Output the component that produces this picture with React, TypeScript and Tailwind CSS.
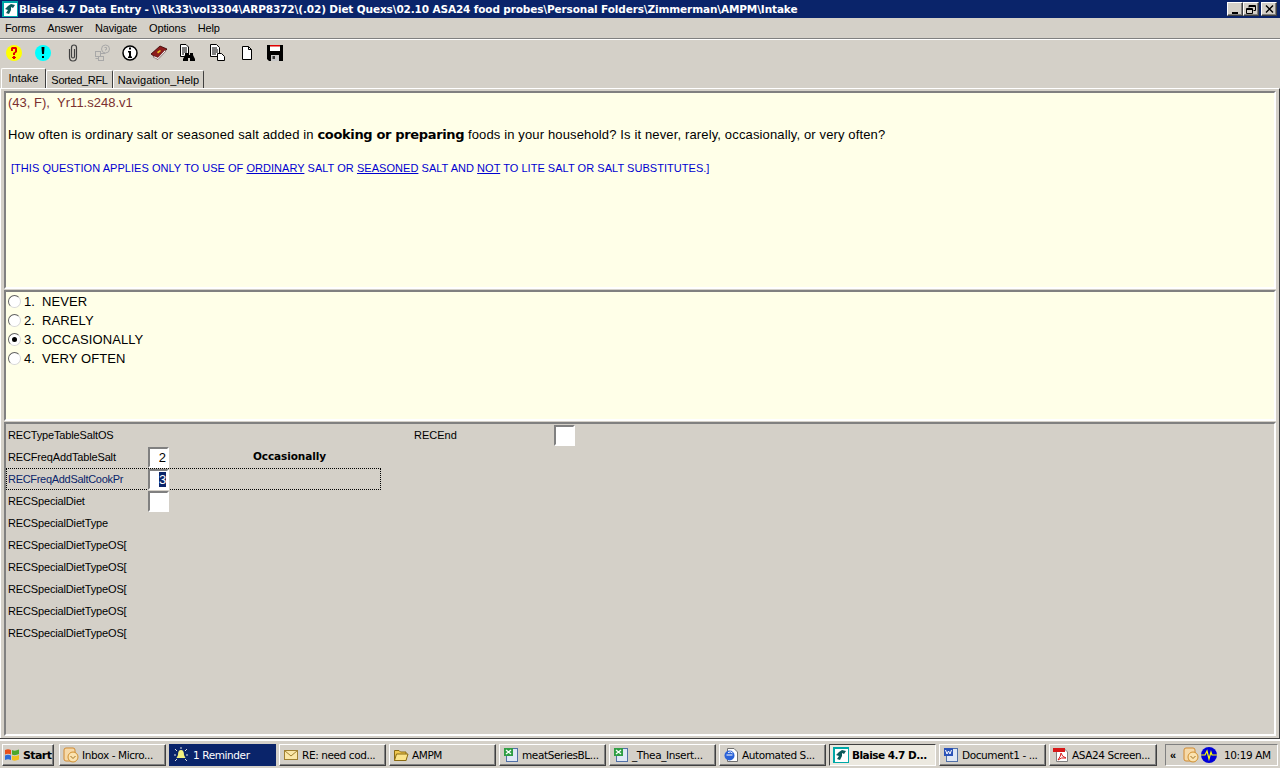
import type React from "react"

const raised =
  "border border-t-white border-l-white border-r-[#404040] border-b-[#404040] shadow-[inset_-1px_-1px_0_#808080]"

const BlaiseLogo = ({ size = 16 }: { size?: number }) => (
  <svg width={size} height={size} viewBox="0 0 16 16" className="shrink-0">
    <rect x="0" y="0" width="16" height="16" fill="#00a8a8" />
    <rect x="2" y="2" width="13" height="13" fill="#fff" />
    <path d="M6 5 L9 3 L13 4 L11 7 L9 6 L9 9 L7 13 L4 12 L6 9 L3 8 Z" fill="#0b5a5a" />
  </svg>
)

const ToolIcons: React.ReactNode[] = [
  <svg key="q" width="18" height="18" viewBox="0 0 18 18">
    <circle cx="9" cy="9" r="8" fill="#ffff00" />
    <path d="M6 7 V4 L7 3 H11 L12 4 V8 L10 9.5 V11 H8 V9 L10 7.5 V5 H8 V7 Z M8 12 H10 V13 H11 V14 H10 V15 H8 V14 H7 V13 H8 Z" fill="#e00000" />
  </svg>,
  <svg key="e" width="18" height="18" viewBox="0 0 18 18">
    <circle cx="9" cy="9" r="8" fill="#00ffff" />
    <path d="M7.5 3 H10.5 L10 10 H8 Z M8 12 H10 V14 H8 Z" fill="#000" />
  </svg>,
  <svg key="clip" width="18" height="18" viewBox="0 0 18 18" fill="none">
    <path d="M5.5 5 V13 Q5.5 17 9 17 Q12.5 17 12.5 13 V3.5 Q12.5 1 10 1 Q7.5 1 7.5 3.5 V12.5 Q7.5 14 9 14 Q10.5 14 10.5 12.5 V5" stroke="#404040" strokeWidth="1.2" />
  </svg>,
  <svg key="net" width="18" height="18" viewBox="0 0 18 18" fill="none" stroke="#a8a8a8">
    <circle cx="12.5" cy="5" r="4" />
    <path d="M11.5 3.5 H13.5 V5.5 H12.5 V6.5" />
    <rect x="2.5" y="7.5" width="5" height="5" />
    <rect x="5.5" y="12.5" width="5" height="4" />
    <path d="M7.5 9.5 H12 V9 M2.5 14.5 H5.5" />
  </svg>,
  <svg key="info" width="18" height="18" viewBox="0 0 18 18">
    <circle cx="9" cy="9" r="7" fill="#fff" stroke="#000" strokeWidth="1.5" />
    <path d="M8 3.5 H10 V5.5 H8 Z M7 7 H10 V12.5 H11 V14 H7 V12.5 H8 V8.5 H7 Z" fill="#000" />
  </svg>,
  <svg key="book" width="18" height="18" viewBox="0 0 18 18">
    <path d="M1 10 L10 2 L17 5 L8 15 Z" fill="#8c1c1c" stroke="#300" strokeWidth="0.8" />
    <path d="M3 13 L8 15.5 L16 7 L15 6 L8 13.5 L4 12 Z" fill="#fff" stroke="#300" strokeWidth="0.4" />
    <path d="M7 8 L10 6 L11 7 L8 9.5 Z" fill="#e8c020" />
  </svg>,
  <svg key="find" width="18" height="18" viewBox="0 0 18 18">
    <path d="M1.5 0.5 H7 L9.5 3 V12.5 H1.5 Z" fill="#fff" stroke="#000" />
    <path d="M3 4 H8 M3 6 H8 M3 8 H8 M3 10 H5" stroke="#000" />
    <path d="M6 11 V9 H9 V11 H11 V9 H14 V11 L16 15 V17 H11 V14 H9 V17 H4 V15 Z" fill="#000" />
  </svg>,
  <svg key="docs" width="18" height="18" viewBox="0 0 18 18">
    <path d="M1.5 0.5 H7.5 L10.5 3.5 V12.5 H1.5 Z" fill="#fff" stroke="#000" />
    <path d="M3 4 H8 M3 6 H9 M3 8 H9 M3 10 H7" stroke="#000" />
    <path d="M8.5 9.5 H12.5 L15.5 12.5 V16.5 H8.5 Z" fill="#fff" stroke="#000" />
  </svg>,
  <svg key="page" width="18" height="18" viewBox="0 0 18 18">
    <path d="M4.5 2.5 H10.5 L13.5 5.5 V15.5 H4.5 Z" fill="#fff" stroke="#000" />
    <path d="M10.5 2.5 V5.5 H13.5" fill="none" stroke="#000" />
  </svg>,
  <svg key="save" width="18" height="18" viewBox="0 0 18 18">
    <path d="M1 1 H17 V17 H3 L1 15 Z" fill="#000" />
    <rect x="4" y="1" width="10" height="6" fill="#fff" />
    <rect x="4" y="1" width="10" height="1.5" fill="#e00000" />
    <rect x="5" y="11" width="8" height="6" fill="#c8c8c8" />
    <rect x="6.5" y="12" width="2.5" height="3" fill="#333" />
  </svg>,
]

const ToolbarOffsets = ["w-[29px]", "w-[30px]", "w-[29px]", "w-[28px]", "w-[29px]", "w-[29px]", "w-[30px]", "w-[29px]", "w-[28px]", "w-[29px]"]

const Radio = ({ checked }: { checked?: boolean }) => (
  <span className="relative flex h-[13px] w-[13px] shrink-0 items-center justify-center rounded-full border border-t-[#606060] border-l-[#606060] border-r-[#d8d8d8] border-b-[#d8d8d8] bg-white">
    {checked && <span className="h-[5px] w-[5px] rounded-full bg-black" />}
  </span>
)

const Field = ({ value, selected }: { value?: string; selected?: boolean }) => (
  <div className="flex h-[21px] w-[21px] shrink-0 items-center justify-end border-2 border-t-[#808080] border-l-[#808080] border-r-white border-b-white bg-white pr-[1px] font-['Liberation_Sans',sans-serif] text-[13px] leading-none text-black">
    {selected ? (
      <span className="flex h-[15px] w-[7px] items-center justify-center bg-[#0a246a] text-white">{value}</span>
    ) : (
      value
    )}
  </div>
)

const labelRows = [
  "RECSpecialDietType",
  "RECSpecialDietTypeOS[",
  "RECSpecialDietTypeOS[",
  "RECSpecialDietTypeOS[",
  "RECSpecialDietTypeOS[",
  "RECSpecialDietTypeOS[",
]

const Label = ({ children }: { children: React.ReactNode }) => (
  <span className="w-[142px] shrink-0 whitespace-nowrap pl-[2px] text-[11px] tracking-[-0.15px]">{children}</span>
)

const OutlookIcon = () => (
  <svg width="16" height="16" viewBox="0 0 16 16" className="shrink-0">
    <rect x="1" y="1" width="11" height="13" rx="2" fill="#f6d9a8" stroke="#d08a30" />
    <circle cx="10" cy="10" r="5" fill="#fbe3b0" stroke="#d09030" />
    <path d="M7.5 9 L10 11.5 L12.5 9" fill="none" stroke="#a07020" />
  </svg>
)

const ExcelIcon = () => (
  <svg width="16" height="16" viewBox="0 0 16 16" className="shrink-0">
    <rect x="3.5" y="1.5" width="11" height="13" fill="#dfe8f6" stroke="#5070a8" />
    <rect x="1" y="1" width="9" height="8" fill="#2f9e44" />
    <path d="M3 3 L8 7 M8 3 L3 7" stroke="#fff" strokeWidth="1.3" />
  </svg>
)

const taskItems: { label: string; w: string; icon: React.ReactNode; active?: boolean; dark?: boolean }[] = [
  { label: "Inbox - Micro...", w: "w-[107px]", icon: <OutlookIcon /> },
  {
    label: "1 Reminder",
    w: "w-[107px]",
    dark: true,
    icon: (
      <svg width="16" height="16" viewBox="0 0 16 16" className="shrink-0">
        <path d="M8 3 Q11 3 11 8 L12.5 11 H3.5 L5 8 Q5 3 8 3 Z" fill="#f4f080" />
        <path d="M1 8 H3 M13 8 H15 M2 2 L4 4 M14 2 L12 4 M2 14 L4 12 M14 14 L12 12 M8 0 V2" stroke="#e0e0e0" />
      </svg>
    ),
  },
  {
    label: "RE: need cod...",
    w: "w-[107px]",
    icon: (
      <svg width="16" height="16" viewBox="0 0 16 16" className="shrink-0">
        <rect x="1.5" y="3.5" width="13" height="9" fill="#fbe7a8" stroke="#a08030" />
        <path d="M1.5 3.5 L8 9 L14.5 3.5" fill="none" stroke="#a08030" />
      </svg>
    ),
  },
  {
    label: "AMPM",
    w: "w-[107px]",
    icon: (
      <svg width="16" height="16" viewBox="0 0 16 16" className="shrink-0">
        <path d="M1.5 13.5 V3.5 H6 L7.5 5 H13 V13.5 Z" fill="#f0c850" stroke="#8a6a10" />
        <path d="M1.5 13.5 L3.5 7 H15 L13 13.5 Z" fill="#fbe48a" stroke="#8a6a10" />
      </svg>
    ),
  },
  { label: "meatSeriesBL...", w: "w-[107px]", icon: <ExcelIcon /> },
  { label: "_Thea_Insert...", w: "w-[107px]", icon: <ExcelIcon /> },
  {
    label: "Automated S...",
    w: "w-[107px]",
    icon: (
      <svg width="16" height="16" viewBox="0 0 16 16" className="shrink-0">
        <path d="M4.5 1.5 H11 L14.5 5 V14.5 H4.5 Z" fill="#fff" stroke="#707070" />
        <circle cx="6.5" cy="8.5" r="5" fill="#2a62d8" />
        <path d="M3.5 8 H9.5 M5 5.5 Q8 4 9.5 6" stroke="#fff" fill="none" />
      </svg>
    ),
  },
  { label: "Blaise 4.7 D...", w: "w-[107px]", active: true, icon: <BlaiseLogo /> },
  {
    label: "Document1 - ...",
    w: "w-[107px]",
    icon: (
      <svg width="16" height="16" viewBox="0 0 16 16" className="shrink-0">
        <rect x="3.5" y="1.5" width="11" height="13" fill="#dfe8f6" stroke="#5070a8" />
        <rect x="1" y="1" width="9" height="8" fill="#2a52b8" />
        <path d="M2.5 3 L4 7 L5.5 4 L7 7 L8.5 3" stroke="#fff" fill="none" />
      </svg>
    ),
  },
  {
    label: "ASA24 Screen...",
    w: "w-[108px]",
    icon: (
      <svg width="16" height="16" viewBox="0 0 16 16" className="shrink-0">
        <path d="M3.5 1.5 H11 L14.5 5 V14.5 H3.5 Z" fill="#fff" stroke="#808080" />
        <rect x="0" y="1" width="12" height="4" fill="#d81818" />
        <path d="M5 13 Q8 9 8 6 Q9 10 13 11 Q8 10 5 13 Z" fill="none" stroke="#d81818" />
      </svg>
    ),
  },
]

export default function App() {
  return (
    <div className="flex h-[768px] w-[1280px] flex-col overflow-hidden bg-[#d4d0c8] font-['Liberation_Sans',sans-serif] text-black">
      {/* title bar */}
      <div className="flex h-[18px] shrink-0 items-center bg-[#0a246a] pl-[2px] pr-[3px]">
        <BlaiseLogo />
        <span className="ml-[1px] whitespace-nowrap font-['DejaVu_Sans',sans-serif] text-[10.5px] font-bold leading-none tracking-[-0.13px] text-white">
          {"Blaise 4.7 Data Entry - \\\\Rk33\\vol3304\\ARP8372\\(.02) Diet Quexs\\02.10 ASA24 food probes\\Personal Folders\\Zimmerman\\AMPM\\Intake"}
        </span>
        <div className="ml-auto flex items-center">
          <button className={`flex h-[14px] w-[16px] items-end justify-center bg-[#d4d0c8] pb-[1px] ${raised}`}>
            <span className="h-[2px] w-[6px] bg-black" />
          </button>
          <button className={`flex h-[14px] w-[16px] items-center justify-center bg-[#d4d0c8] ${raised}`}>
            <svg width="10" height="9" viewBox="0 0 10 9" fill="none" stroke="#000">
              <path d="M3 2.5 V0.5 H9.5 V5.5 H7.5 M3 1.5 H9.5 M0.5 3.5 H6.5 V8.5 H0.5 Z M0.5 4.5 H6.5" />
            </svg>
          </button>
          <button className={`ml-[2px] flex h-[14px] w-[16px] items-center justify-center bg-[#d4d0c8] ${raised}`}>
            <svg width="9" height="8" viewBox="0 0 9 8" fill="none" stroke="#000" strokeWidth="1.4">
              <path d="M1 0.5 L8 7.5 M8 0.5 L1 7.5" />
            </svg>
          </button>
        </div>
      </div>

      {/* menu */}
      <div className="flex h-[20px] shrink-0 items-center gap-[12px] pl-[5px] pt-[1px] text-[11px] leading-none tracking-[-0.17px]">
        <span>Forms</span>
        <span>Answer</span>
        <span>Navigate</span>
        <span>Options</span>
        <span>Help</span>
      </div>

      {/* toolbar */}
      <div className="flex h-[29px] shrink-0 items-center border-t border-[#808080] pl-[5px] shadow-[inset_0_1px_0_#fff]">
        {ToolIcons.map((icon, i) => (
          <span key={i} className={`flex h-[18px] shrink-0 items-center ${ToolbarOffsets[i]}`}>
            {icon}
          </span>
        ))}
      </div>

      {/* tabs */}
      <div className="z-10 flex h-[21px] shrink-0 items-end pl-[1px] text-[11px] leading-none">
        <div className="flex h-[20px] w-[45px] items-center justify-center rounded-t-[2px] border border-b-0 border-t-white border-l-white border-r-[#404040] bg-[#d4d0c8]">
          Intake
        </div>
        <div className="flex h-[18px] w-[67px] items-center justify-center rounded-t-[2px] border border-b-0 border-t-white border-l-white border-r-[#404040] bg-[#d4d0c8] pt-[1px] tracking-[-0.3px]">
          Sorted_RFL
        </div>
        <div className="flex h-[18px] w-[91px] items-center justify-center rounded-t-[2px] border border-b-0 border-t-white border-l-white border-r-[#404040] bg-[#d4d0c8] pt-[1px] tracking-[0.05px]">
          Navigation_Help
        </div>
      </div>

      {/* pages frame */}
      <div className="flex h-[650px] shrink-0 flex-col border border-t-white border-l-white border-r-[#404040] border-b-0 px-[3px] pt-[2px]">
        {/* question */}
        <div className="h-[198px] shrink-0 border-2 border-t-[#808080] border-l-[#808080] border-r-white border-b-white bg-[#ffffe8] pl-[2px] pt-[2px]">
          <p className="text-[13px] leading-[16px] text-[#7a3030]">(43, F),&nbsp;&nbsp;Yr11.s248.v1</p>
          <p className="mt-[16px] text-[13px] leading-[16px] tracking-[0.14px]">
            How often is ordinary salt or seasoned salt added in{" "}
            <b className="font-['DejaVu_Sans',sans-serif] text-[13px] tracking-[-0.35px]">cooking or preparing</b> foods
            in your household? Is it never, rarely, occasionally, or very often?
          </p>
          <p className="ml-[3px] mt-[17px] text-[11px] leading-[16px] tracking-[0.04px] text-[#0000d0]">
            [THIS QUESTION APPLIES ONLY TO USE OF <u>ORDINARY</u> SALT OR <u>SEASONED</u> SALT AND <u>NOT</u> TO LITE
            SALT OR SALT SUBSTITUTES.]
          </p>
        </div>

        {/* answers */}
        <div className="mt-[1px] flex h-[131px] shrink-0 flex-col border-2 border-t-[#808080] border-l-[#808080] border-r-white border-b-white bg-[#ffffe8] pl-[2px] text-[13px] tracking-[0.1px]">
          {[
            ["1.", "NEVER"],
            ["2.", "RARELY"],
            ["3.", "OCCASIONALLY"],
            ["4.", "VERY OFTEN"],
          ].map(([n, t], i) => (
            <div key={n} className="flex h-[19px] items-center">
              <Radio checked={i === 2} />
              <span className="ml-[3px] w-[18px]">{n}</span>
              <span>{t}</span>
            </div>
          ))}
        </div>

        {/* form fields */}
        <div className="relative mt-[1px] flex h-[314px] shrink-0 flex-col border-2 border-t-[#808080] border-l-[#808080] border-r-white border-b-white">
          <div className="flex h-[22px] items-center">
            <Label>RECTypeTableSaltOS</Label>
            <span className="ml-[266px] w-[140px] text-[11px]">RECEnd</span>
            <Field />
          </div>
          <div className="flex h-[22px] items-center">
            <Label>RECFreqAddTableSalt</Label>
            <Field value="2" />
            <span className="ml-[84px] font-['DejaVu_Sans',sans-serif] text-[10.5px] font-bold tracking-[-0.1px]">
              Occasionally
            </span>
          </div>
          <div className="flex h-[22px] w-[375px] items-center border border-dotted border-black">
            <span className="w-[142px] shrink-0 whitespace-nowrap pl-[1px] text-[11px] tracking-[-0.3px] text-[#0a246a]">
              RECFreqAddSaltCookPr
            </span>
            <span className="-ml-[1px]">
              <Field value="3" selected />
            </span>
          </div>
          <div className="flex h-[22px] items-center">
            <Label>RECSpecialDiet</Label>
            <Field />
          </div>
          {labelRows.map((label, i) => (
            <div key={i} className="flex h-[22px] items-center">
              <Label>{label}</Label>
            </div>
          ))}
        </div>
      </div>

      {/* taskbar */}
      <div className="flex h-[30px] shrink-0 items-start gap-[3px] border-t border-[#404040] bg-[#d4d0c8] pl-[2px] pt-[5px] text-[11px] leading-none shadow-[inset_0_2px_0_#fff]">
        <button className={`mr-[2px] flex h-[22px] w-[52px] items-center gap-[3px] bg-[#d4d0c8] pl-[1px] font-bold ${raised}`}>
          <svg width="16" height="14" viewBox="0 0 16 14" className="shrink-0">
            <path d="M1 2 Q4 0.5 7 2 V6.5 Q4 5 1 6.5 Z" fill="#e8501c" />
            <path d="M8 2 Q11 3.5 15 1.5 V6 Q11 8 8 6.5 Z" fill="#4ca82c" />
            <path d="M1 7.5 Q4 6 7 7.5 V12 Q4 10.5 1 12 Z" fill="#2c6cd8" />
            <path d="M8 7.5 Q11 9 15 7 V11.5 Q11 13.5 8 12 Z" fill="#f0c020" />
          </svg>
          <span className="font-['DejaVu_Sans',sans-serif] text-[11px] tracking-[-0.6px]">Start</span>
        </button>
        {taskItems.map((t) => (
          <div
            key={t.label}
            className={`flex h-[22px] shrink-0 items-center ${t.w} ${
              t.dark
                ? "gap-[4px] bg-[#0a246a] pl-[4px] text-white"
                : t.active
                  ? "gap-[3px] border border-t-[#404040] border-l-[#404040] border-r-white border-b-white bg-[#ece9e0] pl-[3px] font-bold"
                  : `gap-[3px] bg-[#d4d0c8] pl-[3px] ${raised}`
            }`}
          >
            {t.icon}
            <span
              className={
                t.active
                  ? "whitespace-nowrap font-['DejaVu_Sans',sans-serif] text-[10.5px] tracking-[-0.5px]"
                  : "whitespace-nowrap font-['DejaVu_Sans',sans-serif] text-[10.5px] tracking-[-0.4px]"
              }
            >
              {t.label}
            </span>
          </div>
        ))}
        <div className="ml-[5px] flex h-[22px] w-[113px] shrink-0 items-center border border-t-[#808080] border-l-[#808080] border-r-white border-b-white pl-[4px]">
          <span className="w-[13px] font-bold">«</span>
          <OutlookIcon />
          <svg width="16" height="16" viewBox="0 0 16 16" className="ml-[2px] shrink-0">
            <circle cx="8" cy="8" r="8" fill="#0000d8" />
            <path d="M0 8 H4 L6 4 L8 12 L10 5 L11 8 H16" fill="none" stroke="#ffff00" strokeWidth="1.2" />
          </svg>
          <span className="ml-[7px] whitespace-nowrap font-['DejaVu_Sans',sans-serif] text-[10.5px] tracking-[-0.4px]">
            10:19 AM
          </span>
        </div>
      </div>
    </div>
  )
}
